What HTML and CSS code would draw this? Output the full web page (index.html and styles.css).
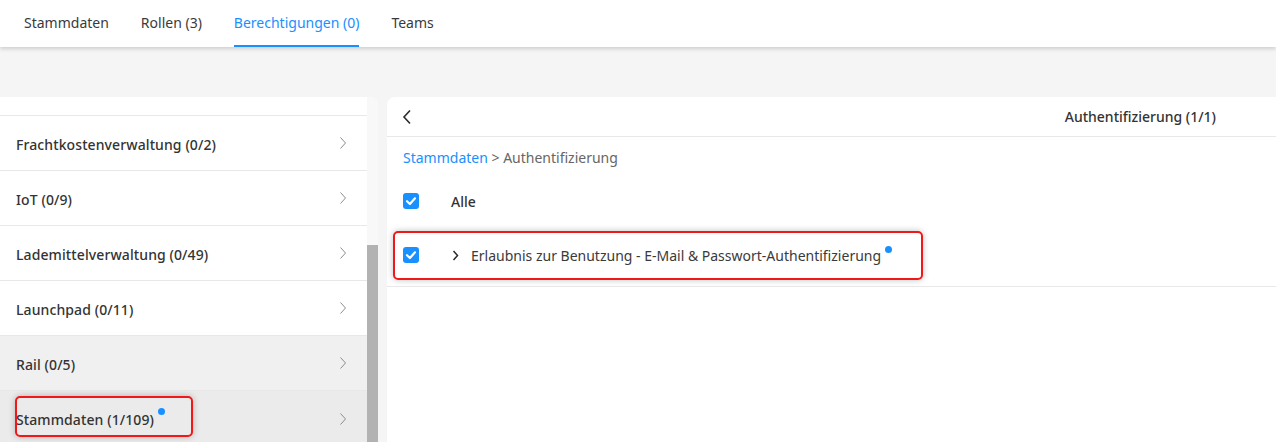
FILE: index.html
```html
<!DOCTYPE html>
<html lang="de">
<head>
<meta charset="utf-8">
<title>Berechtigungen</title>
<link rel="stylesheet" href="styles.css">
</head>
<body>
<header class="tabs">
  <div class="tab">Stammdaten</div>
  <div class="tab">Rollen (3)</div>
  <div class="tab active">Berechtigungen (0)</div>
  <div class="tab">Teams</div>
</header>
<main class="content">
  <section class="left">
    <div class="list">
      <div class="row partial"></div>
      <div class="row"><span class="label">Frachtkostenverwaltung (0/2)</span><svg class="chev" viewBox="0 0 8 14"><path d="M1.5 1.5 L6.5 7 L1.5 12.5"/></svg></div>
      <div class="row"><span class="label">IoT (0/9)</span><svg class="chev" viewBox="0 0 8 14"><path d="M1.5 1.5 L6.5 7 L1.5 12.5"/></svg></div>
      <div class="row"><span class="label">Lademittelverwaltung (0/49)</span><svg class="chev" viewBox="0 0 8 14"><path d="M1.5 1.5 L6.5 7 L1.5 12.5"/></svg></div>
      <div class="row"><span class="label">Launchpad (0/11)</span><svg class="chev" viewBox="0 0 8 14"><path d="M1.5 1.5 L6.5 7 L1.5 12.5"/></svg></div>
      <div class="row hover"><span class="label">Rail (0/5)</span><svg class="chev" viewBox="0 0 8 14"><path d="M1.5 1.5 L6.5 7 L1.5 12.5"/></svg></div>
      <div class="row selected"><span class="label">Stammdaten (1/109)<span class="dot"></span></span><svg class="chev" viewBox="0 0 8 14"><path d="M1.5 1.5 L6.5 7 L1.5 12.5"/></svg><span class="mark mark-left"></span></div>
    </div>
    <div class="scrollbar"><div class="thumb"></div></div>
  </section>
  <section class="right">
    <div class="rhead">
      <svg class="back" viewBox="0 0 10 16"><path d="M8 1.5 L2 8 L8 14.5"/></svg>
      <span class="title">Authentifizierung (1/1)</span>
    </div>
    <div class="crumb"><span class="link">Stammdaten</span> &gt; Authentifizierung</div>
    <div class="all">
      <span class="cb"><svg viewBox="0 0 16 16"><path d="M4 8.2 L6.9 11 L12 5.3"/></svg></span>
      <span class="alltext">Alle</span>
    </div>
    <div class="item">
      <span class="cb"><svg viewBox="0 0 16 16"><path d="M4 8.2 L6.9 11 L12 5.3"/></svg></span>
      <svg class="ichev" viewBox="0 0 7 11"><path d="M1.5 1 L5.5 5.5 L1.5 10"/></svg>
      <span class="itext">Erlaubnis zur Benutzung - E-Mail &amp; Passwort-Authentifizierung<span class="dot"></span></span>
      <span class="mark mark-right"></span>
    </div>
  </section>
</main>
</body>
</html>
```

FILE: styles.css
```css
* { box-sizing: border-box; }
html, body {
  margin: 0;
  padding: 0;
  height: 100%;
}
body {
  width: 1276px;
  height: 442px;
  overflow: hidden;
  background: #f5f5f5;
  font-family: "Noto Sans", "Open Sans", sans-serif;
  font-size: 14px;
  color: #333;
  display: flex;
  flex-direction: column;
}
.tabs {
  position: relative;
  z-index: 2;
  height: 47px;
  background: #fff;
  box-shadow: 0 2px 4px rgba(0,0,0,0.16);
  display: flex;
  padding-left: 24px;
  gap: 32px;
}
.tab {
  height: 47px;
  line-height: 46px;
  color: #3a3a3a;
  white-space: nowrap;
}
.tab.active {
  color: #1890ff;
  border-bottom: 2px solid #1890ff;
}
.content {
  flex: 1;
  display: flex;
  gap: 9px;
  padding-top: 50px;
  min-height: 0;
}
.left {
  width: 378px;
  background: #fff;
  border-top-right-radius: 8px;
  display: flex;
  overflow: hidden;
}
.list {
  flex: 1;
  display: flex;
  flex-direction: column;
}
.row {
  position: relative;
  height: 55px;
  flex: none;
  border-bottom: 1px solid #e8e8e8;
  display: flex;
  align-items: center;
  justify-content: space-between;
  padding: 0 20px 0 16px;
}
.row.partial { height: 19px; }
.row.hover { background: #f0f0f0; }
.row.selected { background: #ebebeb; border-bottom: none; }
.label {
  position: relative;
  font-weight: 500;
  color: #333;
  letter-spacing: 0.1px;
  padding-top: 2px;
}
.chev {
  width: 8px;
  height: 14px;
  fill: none;
  stroke: #8c8c8c;
  stroke-width: 1;
}
.dot {
  position: absolute;
  width: 7px;
  height: 7px;
  border-radius: 50%;
  background: #1890ff;
  right: -11px;
  top: 0;
}
.scrollbar {
  width: 11px;
  background: #f8f8f8;
  display: flex;
  flex-direction: column;
  padding-top: 148px;
}
.thumb {
  flex: 1;
  background: #b2b2b2;
}
.right {
  flex: 1;
  background: #fff;
  border-top-left-radius: 8px;
  position: relative;
}
.rhead {
  height: 40px;
  border-bottom: 1px solid #e8e8e8;
  display: flex;
  align-items: center;
  justify-content: space-between;
  padding: 0 60px 0 15px;
}
.back {
  width: 10px;
  height: 16px;
  fill: none;
  stroke: #2b2b2b;
  stroke-width: 1.6;
}
.title {
  font-weight: 500;
  color: #333;
}
.crumb {
  padding: 11px 16px 0;
  line-height: 20px;
  color: #666;
}
.link { color: #1890ff; }
.all {
  display: flex;
  align-items: center;
  height: 22px;
  margin-top: 22px;
  padding-left: 16px;
}
.cb {
  width: 16px;
  height: 16px;
  border-radius: 3px;
  background: #1890ff;
  display: inline-flex;
  flex: none;
}
.cb svg {
  width: 16px;
  height: 16px;
  fill: none;
  stroke: #fff;
  stroke-width: 2.2;
  stroke-linecap: round;
  stroke-linejoin: round;
}
.alltext {
  margin-left: 32px;
  font-weight: 500;
  color: #333;
}
.item {
  position: relative;
  height: 75px;
  display: flex;
  align-items: center;
  padding-left: 16px;
  padding-top: 12px;
  border-bottom: 1px solid #e8e8e8;
}
.ichev {
  width: 7px;
  height: 11px;
  margin-left: 33px;
  fill: none;
  stroke: #2b2b2b;
  stroke-width: 1.5;
}
.itext {
  position: relative;
  margin-left: 12px;
  color: #3a3a3a;
}
.mark {
  position: absolute;
  border: 2px solid #f01818;
  border-radius: 5px;
  box-shadow: 0 0 6px rgba(0,0,0,0.25);
  pointer-events: none;
}
.mark-left {
  left: 15px;
  top: 5px;
  width: 178px;
  height: 41px;
}
.mark-right {
  left: 6px;
  top: 19px;
  width: 530px;
  height: 49px;
}
```
